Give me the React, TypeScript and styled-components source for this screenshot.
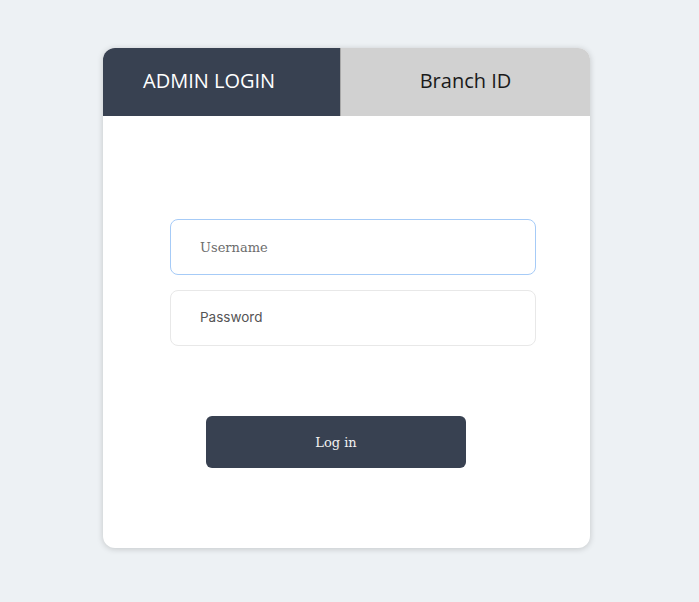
import React from "react";
import styled, { createGlobalStyle } from "styled-components";

const Global = createGlobalStyle`
  html, body { margin: 0; padding: 0; background: #edf1f4; }
  body { font-family: "Open Sans", "Noto Sans", sans-serif; }
`;

const Page = styled.div`
  min-height: 602px;
  padding-top: 48px;
  padding-left: 103px;
  box-sizing: border-box;
`;

const Card = styled.div`
  width: 487px;
  height: 500px;
  background: #ffffff;
  border-radius: 12px;
  box-shadow: 0 1px 6px rgba(0, 0, 0, 0.18);
  overflow: hidden;
  display: flex;
  flex-direction: column;
`;

const Tabs = styled.div`
  display: flex;
  height: 68px;
  flex-shrink: 0;
`;

const Tab = styled.div<{ $active?: boolean }>`
  display: flex;
  align-items: center;
  box-sizing: border-box;
  padding-bottom: 4px;
  font-family: "Open Sans", "Noto Sans", sans-serif;
  font-size: 20px;
  ${(p) =>
    p.$active
      ? `
    width: 237px;
    background: #384151;
    color: #ffffff;
    padding-left: 40px;
  `
      : `
    flex: 1;
    background: #d1d1d1;
    color: #1a1a1a;
    justify-content: center;
    border-left: 1px solid #a8a8a8;
  `}
`;

const Form = styled.div`
  display: flex;
  flex-direction: column;
  padding: 103px 54px 0 67px;
`;

const Field = styled.div<{ $focused?: boolean }>`
  height: 56px;
  box-sizing: border-box;
  border: 1px solid ${(p) => (p.$focused ? "#a6cbf7" : "#e8e8e8")};
  border-radius: 8px;
  display: flex;
  align-items: center;
  padding-left: 29px;
  font-size: 14px;
  color: #707070;
  & + & { margin-top: 15px; }
`;

const SerifLabel = styled.span`
  font-family: "DejaVu Serif", "Liberation Serif", serif;
  font-size: 13px;
  color: #6c6c6c;
`;

const SansLabel = styled.span`
  font-family: "Inter", "Roboto", sans-serif;
  font-size: 13.5px;
  color: #555555;
  margin-bottom: 3px;
`;

const Button = styled.button`
  margin-top: 70px;
  margin-left: 36px;
  width: 260px;
  height: 52px;
  border: none;
  border-radius: 6px;
  background: #384151;
  color: #f2f2f2;
  font-family: "DejaVu Serif", "Liberation Serif", serif;
  font-size: 13px;
  padding-top: 2px;
  cursor: pointer;
`;

export default function App() {
  return (
    <>
      <Global />
      <Page>
        <Card>
          <Tabs>
            <Tab $active>ADMIN LOGIN</Tab>
            <Tab>Branch ID</Tab>
          </Tabs>
          <Form>
            <Field $focused>
              <SerifLabel>Username</SerifLabel>
            </Field>
            <Field>
              <SansLabel>Password</SansLabel>
            </Field>
            <Button>Log in</Button>
          </Form>
        </Card>
      </Page>
    </>
  );
}
